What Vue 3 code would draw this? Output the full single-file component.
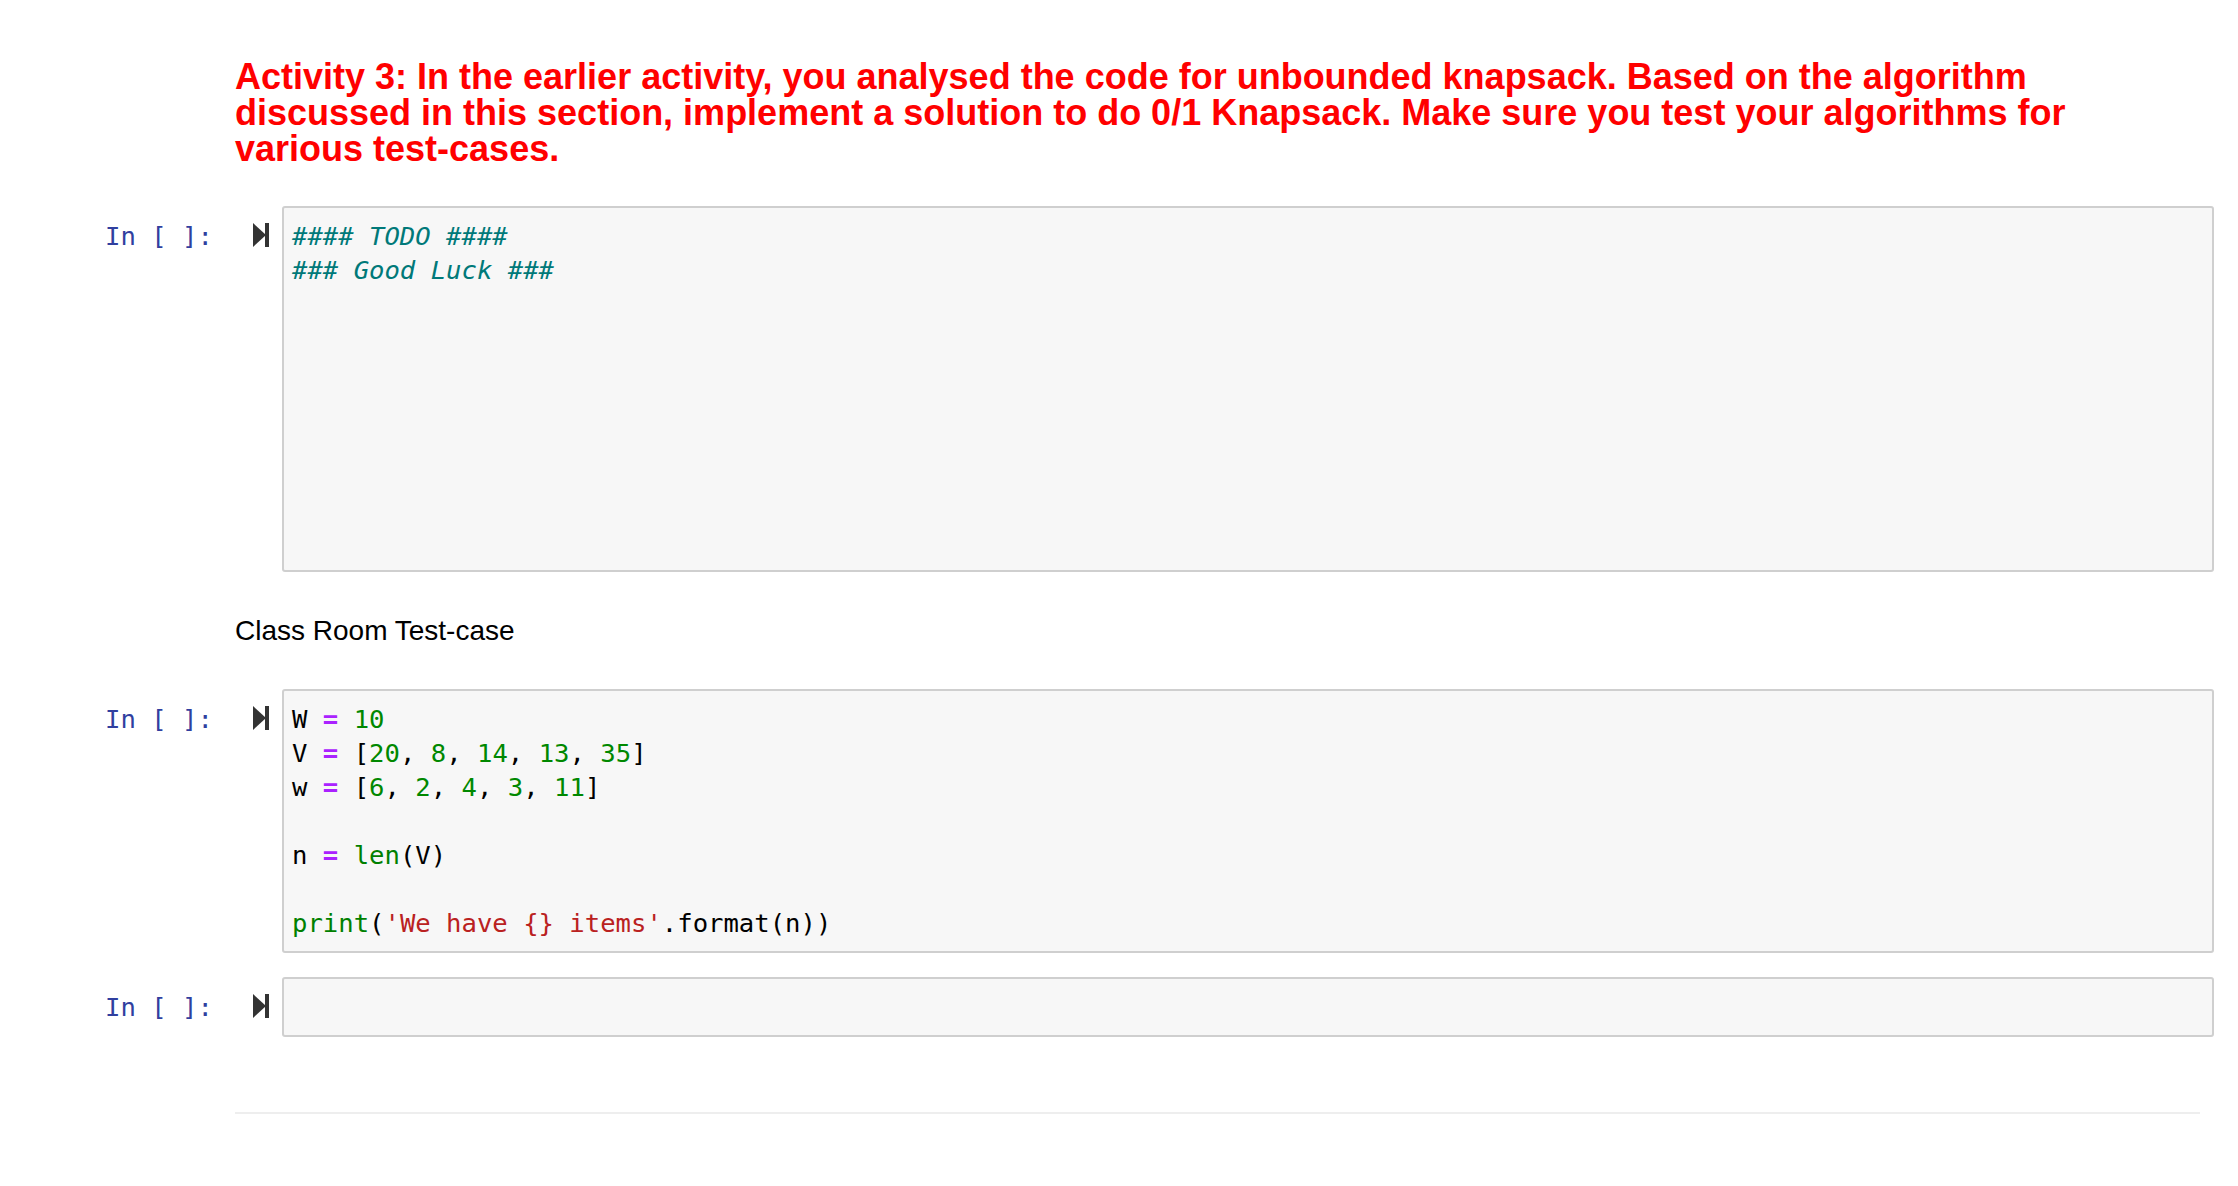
<script setup>
const cells = [
  { id: 1, lines: [
    [['c', '#### TODO ####']],
    [['c', '### Good Luck ###']],
    [], [], [], [], [], [], [], []
  ] },
  { id: 2, lines: [
    [['', 'W '], ['o', '='], ['', ' '], ['n', '10']],
    [['', 'V '], ['o', '='], ['', ' ['], ['n', '20'], ['', ', '], ['n', '8'], ['', ', '], ['n', '14'], ['', ', '], ['n', '13'], ['', ', '], ['n', '35'], ['', ']']],
    [['', 'w '], ['o', '='], ['', ' ['], ['n', '6'], ['', ', '], ['n', '2'], ['', ', '], ['n', '4'], ['', ', '], ['n', '3'], ['', ', '], ['n', '11'], ['', ']']],
    [],
    [['', 'n '], ['o', '='], ['', ' '], ['b', 'len'], ['', '(V)']],
    [],
    [['b', 'print'], ['', '('], ['s', "'We have {} items'"], ['', '.format(n))']]
  ] },
  { id: 3, lines: [[]] }
]
</script>

<template>
  <main class="page">
    <h3 class="activity">Activity 3: In the earlier activity, you analysed the code for unbounded knapsack. Based on the algorithm<br>discussed in this section, implement a solution to do 0/1 Knapsack. Make sure you test your algorithms for<br>various test-cases.</h3>

    <template v-for="cell in cells" :key="cell.id">
      <section class="cell" :class="'cell-' + cell.id">
        <div class="prompt">In [ ]:</div>
        <div class="run" role="button" aria-label="Run">
          <svg width="16" height="24" viewBox="0 0 16 24"><path d="M0 0 L13 12 L0 24 Z" fill="#333"/><rect x="12" y="0" width="4" height="24" fill="#333"/></svg>
        </div>
        <div class="input">
          <div v-for="(line, i) in cell.lines" :key="i" class="line"><span v-for="(tok, j) in line" :key="j" :class="tok[0]">{{ tok[1] }}</span></div>
        </div>
      </section>
      <p v-if="cell.id === 1" class="note">Class Room Test-case</p>
    </template>

    <hr class="rule">
  </main>
</template>

<style>
html, body { margin: 0; background: #fff; }
</style>

<style scoped>
.page {
  width: 2238px;
  height: 1186px;
  box-sizing: border-box;
  padding-top: 59px;
  overflow: hidden;
  background: #fff;
}
.activity {
  margin: 0 0 0 235px;
  font: bold 36px/36px "Liberation Sans", Arial, sans-serif;
  color: #f00;
  white-space: nowrap;
}
.cell {
  display: flex;
  align-items: flex-start;
  margin-right: 24px;
}
.cell-1 { margin-top: 39px; }
.cell-3 { margin-top: 24px; }
.prompt {
  width: 253px;
  flex: none;
  box-sizing: border-box;
  padding: 13px 0 0 105px;
  font: 25.6px/34px "DejaVu Sans Mono", monospace;
  color: #303f9f;
  white-space: pre;
}
.run {
  flex: none;
  width: 29px;
  padding-top: 17px;
}
.run svg { display: block; }
.input {
  flex: 1;
  padding: 11px 11px 11px 8px;
  border: 2px solid #cfcfcf;
  border-radius: 3px;
  background: #f7f7f7;
  font: 25.6px/34px "DejaVu Sans Mono", monospace;
  color: #000;
}
.line { height: 34px; white-space: pre; }
.c { color: #007979; font-style: italic; }
.o { color: #a2f; font-weight: bold; }
.n { color: #080; }
.b { color: #008000; }
.s { color: #ba2121; }
.note {
  margin: 42px 0 41px 235px;
  font: 28px/34px "Liberation Sans", Arial, sans-serif;
  color: #000;
}
.rule {
  margin: 75px 38px 0 235px;
  border: 0;
  border-top: 2px solid #eee;
}
</style>
